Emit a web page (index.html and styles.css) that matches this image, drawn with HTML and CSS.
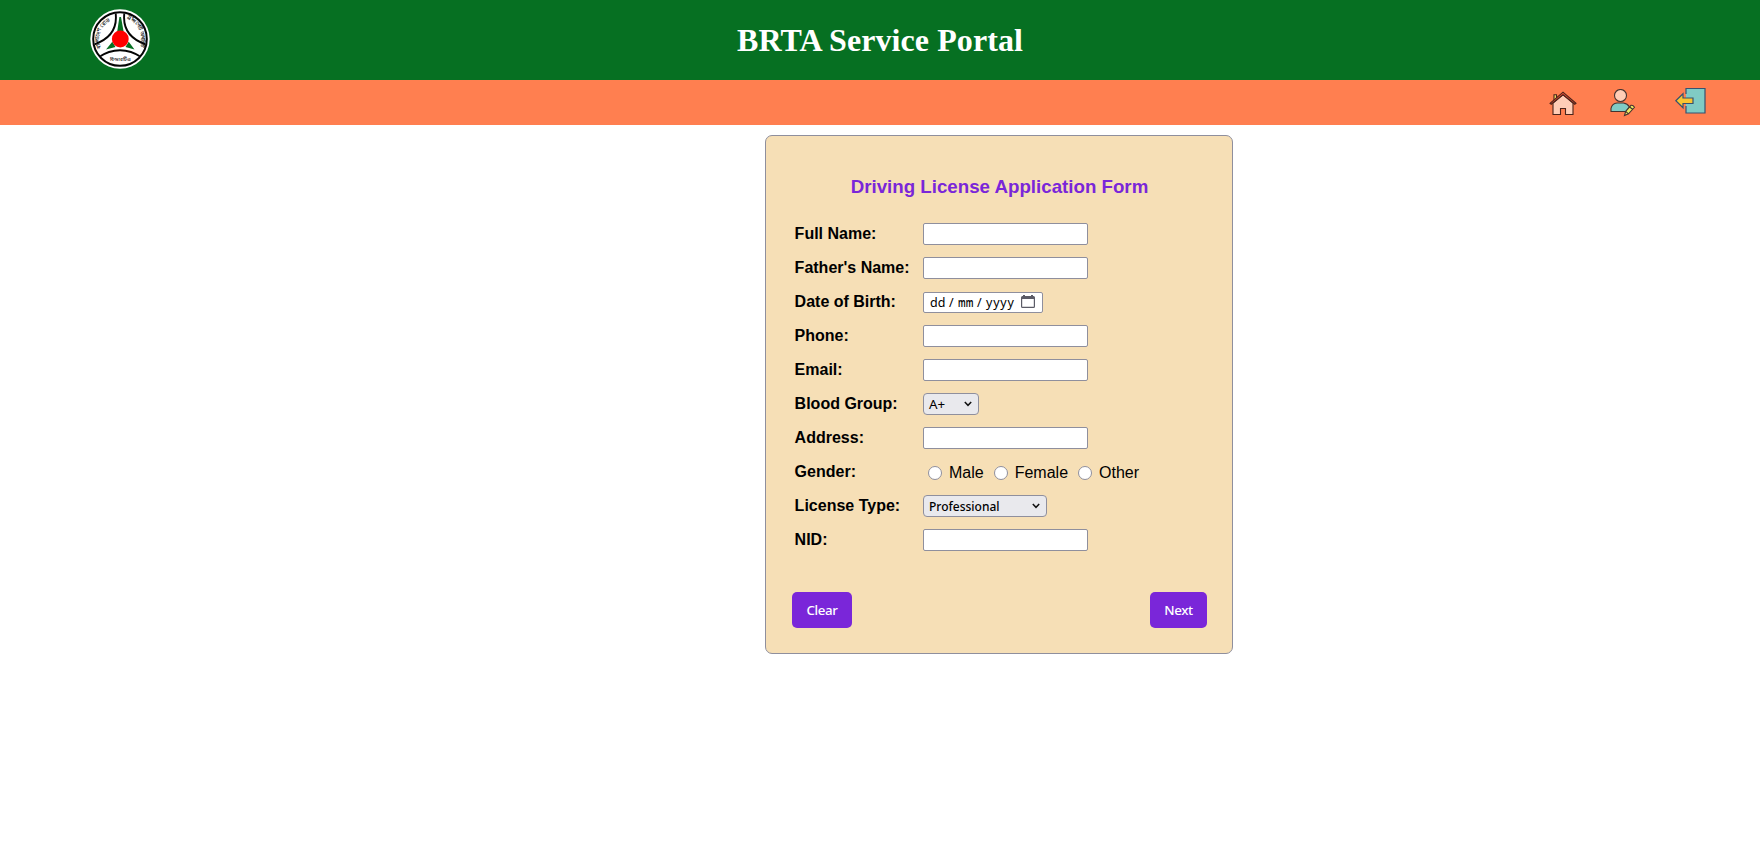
FILE: index.html
```html
<!DOCTYPE html>
<html lang="en">
<head>
<meta charset="utf-8">
<title>BRTA Service Portal</title>
<link rel="stylesheet" href="styles.css">
</head>
<body>
<header class="header">
  <svg class="logo" viewBox="0 0 60 60">
    <defs>
      <clipPath id="disc"><circle cx="30" cy="30" r="26"/></clipPath>
      <path id="arc-left" d="M11.5 39 A20 20 0 0 1 24 10.5"/>
      <path id="arc-right" d="M37 9.5 A22 22 0 0 1 49 40"/>
    </defs>
    <circle cx="30" cy="30" r="29.7" fill="#fff"/>
    <circle cx="30" cy="30" r="26.8" fill="#fff" stroke="#050505" stroke-width="2"/>
    <g clip-path="url(#disc)" fill="none" stroke="#050505" stroke-width="1.9">
      <path d="M25.5 3 Q29 27 4 35.5"/>
      <path d="M34.5 3 Q31 27 56 35.5"/>
      <path d="M8 48.5 Q30 34 52 48.5"/>
    </g>
    <path fill="#067022" d="M29.4 8 H31 L33.5 22 H27.3 Z M16 40.5 L22.3 32.7 L25.5 38 Z M44.5 40.5 L38.7 32.7 L35.5 38 Z"/>
    <circle cx="30.3" cy="30" r="8.4" fill="#f00"/>
    <g class="logo-text">
      <text><textPath href="#arc-left" textLength="31">বাংলাদেশ রোড</textPath></text>
      <text><textPath href="#arc-right">ট্রান্সপোর্ট অথরিটি</textPath></text>
      <text class="logo-name" x="30" y="52" text-anchor="middle">বিআরটিএ</text>
    </g>
  </svg>
  <h1 class="site-title">BRTA Service Portal</h1>
</header>
<nav class="nav">
  <a class="nav-home"><svg width="28" height="26" viewBox="0 0 28 26" stroke="#4a241b" stroke-width="1.1">
    <path fill="#f4df62" d="M5 10V3.7H7.5V8"/>
    <path fill="#ffcdb6" d="M4 12L14 3.5L24 12V23.5H16.5V17.5H11.5V23.5H4Z"/>
    <path fill="#e84d35" d="M1 12.3L14 1.2L27 12.3L25.8 13.3L14 3.7L2.2 13.3Z"/>
  </svg></a>
  <a class="nav-user"><svg width="26" height="29" viewBox="0 0 26 29" stroke="#46332f" stroke-width="1.1">
    <circle cx="10.5" cy="6.5" r="6" fill="#ffcdb6"/>
    <path fill="#80cbc4" d="M1 22.5V19.5Q2 14.5 7 14H13.5Q17.5 14.5 19.5 18L16 22.5Z"/>
    <path fill="#eeed62" d="M14.5 26.5L15.7 22.3L21 16.3Q23 15.8 24.5 18.3L18.5 24.8Z"/>
    <path fill="none" d="M15.7 22.3L18.5 24.8M19.5 18L22.7 20.3"/>
  </svg></a>
  <a class="nav-exit"><svg width="32" height="28" viewBox="0 0 32 28" stroke="#365270" stroke-width="1.2">
    <path fill="#80cbc4" stroke="none" d="M11 1.5H30V26H11Z"/>
    <path fill="none" d="M11 7V1.5H30V26H11V19"/>
    <path fill="#fbc52f" d="M.8 13.7L8 6.7V11H18V16.5H8V20.8Z"/>
  </svg></a>
</nav>
<main>
  <form class="card">
    <h2 class="form-title">Driving License Application Form</h2>
    <div class="fields">
      <label class="label" for="name">Full Name:</label><input class="text" id="name">
      <label class="label" for="father">Father's Name:</label><input class="text" id="father">
      <span class="label">Date of Birth:</span>
      <div class="date"><span class="dd">dd</span><span class="slash">/</span><span class="mm">mm</span><span class="slash">/</span><span class="yyyy">yyyy</span>
        <svg width="14" height="13" viewBox="0 0 14 13"><path fill="#5b5b66" fill-rule="evenodd" d="M2 0H4V1H10V0H12V1H12.5Q14 1 14 2.5V11.5Q14 13 12.5 13H1.5Q0 13 0 11.5V2.5Q0 1 1.5 1H2Z M1.2 4V11.8H12.8V4Z"/></svg>
      </div>
      <label class="label" for="phone">Phone:</label><input class="text" id="phone">
      <label class="label" for="email">Email:</label><input class="text" id="email">
      <span class="label">Blood Group:</span>
      <div class="select blood"><span>A+</span><svg width="8" height="6" viewBox="0 0 8 6"><path d="M.8 1L4 4.3L7.2 1"/></svg></div>
      <label class="label" for="address">Address:</label><input class="text" id="address">
      <span class="label">Gender:</span>
      <div class="radios">
        <label class="option"><input class="radio" type="radio" name="gender">Male</label>
        <label class="option"><input class="radio" type="radio" name="gender">Female</label>
        <label class="option"><input class="radio" type="radio" name="gender">Other</label>
      </div>
      <span class="label">License Type:</span>
      <div class="select license"><span class="narrow">Professional</span><svg width="8" height="6" viewBox="0 0 8 6"><path d="M.8 1L4 4.3L7.2 1"/></svg></div>
      <label class="label" for="nid">NID:</label><input class="text" id="nid">
    </div>
    <div class="actions">
      <button class="button clear" type="reset">Clear</button>
      <button class="button next" type="button">Next</button>
    </div>
  </form>
</main>
</body>
</html>
```
FILE: styles.css
```css
* { box-sizing: border-box; }
body {
  margin: 0;
  background: #fff;
  color: #000;
  font: 16px "Liberation Sans", Arial, sans-serif;
}
.header {
  display: grid;
  grid-template-columns: 1fr auto 1fr;
  align-items: center;
  height: 80px;
  background: #067022;
}
.logo { width: 60px; height: 60px; margin: 0 0 2px 90px; }
.logo-text { font: bold 5.2px "Noto Sans", sans-serif; fill: #111; }
.logo-name { font-size: 5px; }
.site-title {
  margin: 1px 0 0;
  color: #fff;
  font: bold 32px "Liberation Serif", "Times New Roman", serif;
  letter-spacing: .08px;
}
.nav {
  display: flex;
  justify-content: flex-end;
  height: 45px;
  padding-right: 53px;
  background: #ff7f50;
}
.nav svg { display: block; }
.nav-home { margin: 11px 33px 0 0; }
.nav-user { margin: 9px 39px 0 0; }
.nav-exit { margin: 7px 0 0; }
.card {
  width: 468px;
  height: 519px;
  margin: 10px 0 0 765px;
  padding: 39px 25px 0 26px;
  background: #f6dfb6;
  border: 1px solid #8f8f9d;
  border-radius: 7px;
}
.form-title {
  height: 24px;
  margin: 0 0 17px;
  color: #7a26d9;
  font-size: 18.72px;
  line-height: 24px;
  text-align: center;
}
.fields {
  display: grid;
  grid-template-columns: 128px 1fr;
  grid-auto-rows: 34px;
  align-items: center;
  padding: 1px 0 0 3px;
}
.label { margin-left: -.4px; font-weight: bold; }
.text, .date, .select {
  height: 22px;
  background: #fff;
  border: 1px solid #8f8f9d;
  border-radius: 2px;
}
.text { width: 165px; margin: 0; padding: 0 3px; outline: 0; }
.date, .select, .button { font: 13.333px "Noto Sans", sans-serif; }
.date {
  display: flex;
  align-items: center;
  width: 120px;
  height: 21px;
  padding-left: 6px;
  font-size: 12.5px;
}
.date span { flex: none; white-space: nowrap; }
.dd { width: 18px; }
.slash { width: 10px; padding-left: 1px; }
.mm { width: 23px; margin-right: -5px; font-weight: 600; transform: scaleX(.64); transform-origin: left; }
.yyyy { width: 35px; letter-spacing: .8px; }
.date svg { margin-top: -2px; }
.select {
  display: flex;
  align-items: center;
  justify-content: space-between;
  padding: 0 6px 0 5px;
  background: #e9e9ed;
  border-radius: 4px;
}
.select svg { fill: none; stroke: #111; stroke-width: 1.5; }
.narrow { font-weight: 500; transform: scaleX(.9); transform-origin: left; }
.blood { width: 56px; }
.license { width: 124px; }
.radios { display: flex; padding: 2px 0 0 5px; }
.option { display: flex; align-items: center; margin-right: 10px; }
.radio {
  appearance: none;
  width: 14px;
  height: 14px;
  margin: 0 7px 0 0;
  background: #fff;
  border: 1px solid #8f8f9d;
  border-radius: 50%;
}
.actions { display: flex; justify-content: space-between; padding-top: 35px; }
.button {
  height: 36px;
  padding: 0;
  background: #7a26d9;
  border: 0;
  border-radius: 5px;
  color: #fff;
  font-weight: 500;
  letter-spacing: -.4px;
}
.clear { width: 60px; }
.next { width: 57px; }
```
